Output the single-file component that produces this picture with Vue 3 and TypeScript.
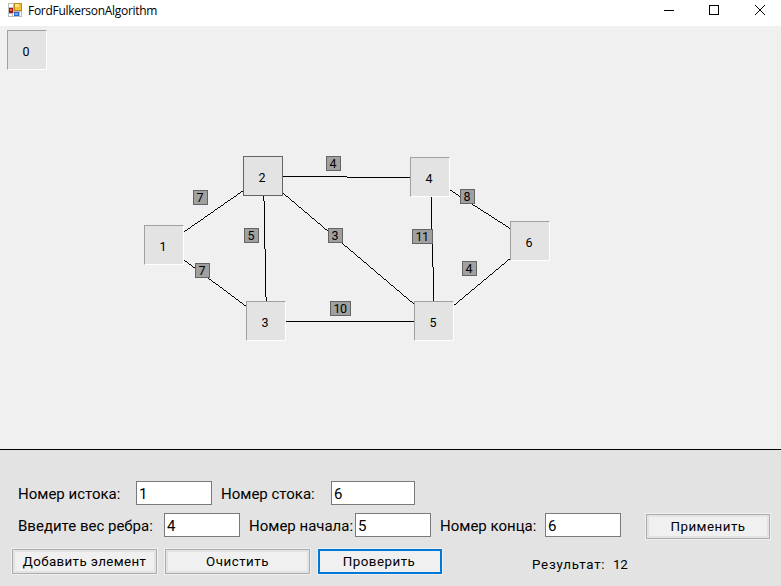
<script setup lang="ts">
import { computed, ref } from 'vue'

interface GraphNode { id: number; x: number; y: number; active?: boolean }
interface Edge { from: number; to: number; weight: number; x: number; y: number }

const nodes: GraphNode[] = [
  { id: 0, x: 7, y: 4 },
  { id: 1, x: 144, y: 199 },
  { id: 2, x: 243, y: 130, active: true },
  { id: 3, x: 246, y: 275 },
  { id: 4, x: 410, y: 131 },
  { id: 5, x: 414, y: 275 },
  { id: 6, x: 510, y: 195 },
]

const edges: Edge[] = [
  { from: 1, to: 2, weight: 7, x: 193, y: 164 },
  { from: 1, to: 3, weight: 7, x: 195, y: 237 },
  { from: 2, to: 3, weight: 5, x: 244, y: 202 },
  { from: 2, to: 4, weight: 4, x: 326, y: 130 },
  { from: 2, to: 5, weight: 3, x: 328, y: 202 },
  { from: 3, to: 5, weight: 10, x: 330, y: 275 },
  { from: 4, to: 5, weight: 11, x: 412, y: 203 },
  { from: 4, to: 6, weight: 8, x: 460, y: 163 },
  { from: 5, to: 6, weight: 4, x: 462, y: 235 },
]

// Builds a one-pixel aliased line as a run of unit squares along the major axis.
function steppedLine(a: GraphNode, b: GraphNode): string {
  const dx = b.x - a.x
  const dy = b.y - a.y
  const steps = Math.max(Math.abs(dx), Math.abs(dy))
  let d = ''
  for (let i = 0; i <= steps; i++) {
    const x = Math.round(a.x + 20 + (dx * i) / steps)
    const y = Math.round(a.y + 20 + (dy * i) / steps)
    d += `M${x} ${y}h1v1h-1z`
  }
  return d
}

const lines = computed(() =>
  edges.map((e) => ({ key: `${e.from}-${e.to}`, d: steppedLine(nodes[e.from], nodes[e.to]) })),
)

const source = ref('1')
const sink = ref('6')
const weight = ref('4')
const start = ref('5')
const end = ref('6')
const result = ref(12)
</script>

<template>
  <div class="window">
    <header class="titlebar">
      <svg class="app-icon" width="14" height="14" viewBox="0 0 14 14" shape-rendering="crispEdges">
        <rect width="14" height="14" fill="#bdbdbd" />
        <rect x="1" y="1" width="4" height="3" fill="#fff" />
        <rect x="1" y="11" width="3" height="2" fill="#fff" />
        <rect x="5" y="10" width="1" height="3" fill="#fff" />
        <rect x="12" y="9" width="1" height="4" fill="#fff" />
        <rect x="6" y="0" width="8" height="8" fill="#b98a18" />
        <rect x="7" y="1" width="6" height="6" fill="#f2c23c" />
        <rect x="7" y="1" width="4" height="3" fill="#ffe07a" />
        <rect x="1" y="5" width="4" height="5" fill="#a31515" />
        <rect x="2" y="6" width="2" height="2" fill="#e76a5c" />
        <rect x="6" y="9" width="5" height="4" fill="#2f62c8" />
        <rect x="7" y="10" width="3" height="2" fill="#79aaf4" />
      </svg>
      <h1 class="title">FordFulkersonAlgorithm</h1>
      <div class="controls">
        <svg width="10" height="10" viewBox="0 0 10 10" shape-rendering="crispEdges"><path d="M0 5.5H10" /></svg>
        <svg width="10" height="10" viewBox="0 0 10 10" shape-rendering="crispEdges"><path d="M.5 .5H9.5V9.5H.5Z" /></svg>
        <svg class="close" width="10" height="10" viewBox="0 0 10 10"><path d="M0 0L10 10M10 0L0 10" /></svg>
      </div>
    </header>

    <main class="canvas">
      <svg class="edges" width="781" height="423" shape-rendering="crispEdges">
        <path v-for="l in lines" :key="l.key" :d="l.d" />
      </svg>
      <div
        v-for="n in nodes"
        :key="n.id"
        class="node"
        :class="{ active: n.active }"
        :style="{ left: n.x + 'px', top: n.y + 'px' }"
      ><span>{{ n.id }}</span></div>
      <div
        v-for="e in edges"
        :key="e.from + '-' + e.to"
        class="weight"
        :class="{ wide: e.weight > 9 }"
        :style="{ left: e.x + 'px', top: e.y + 'px' }"
      >{{ e.weight }}</div>
    </main>

    <section class="panel">
      <div class="row first">
        <label class="l-source" for="source">Номер истока:</label>
        <input id="source" v-model="source" />
        <label class="l-sink" for="sink">Номер стока:</label>
        <input id="sink" v-model="sink" class="long" />
      </div>
      <div class="row second">
        <label class="l-weight" for="weight">Введите вес ребра:</label>
        <input id="weight" v-model="weight" />
        <label class="l-start" for="start">Номер начала:</label>
        <input id="start" v-model="start" />
        <label class="l-end" for="end">Номер конца:</label>
        <input id="end" v-model="end" />
        <button class="apply">Применить</button>
      </div>
      <div class="row third">
        <button class="add">Добавить элемент</button>
        <button class="clear">Очистить</button>
        <button class="check">Проверить</button>
        <p class="result"><span class="caption">Результат:</span><span class="value">{{ result }}</span></p>
      </div>
    </section>
  </div>
</template>

<style>
body {
  margin: 0;
  overflow: hidden;
}
</style>

<style scoped>
.window {
  display: flex;
  flex-direction: column;
  width: 781px;
  height: 586px;
  background: #f0f0f0;
  color: #000;
  font-family: Roboto, "Liberation Sans", Arial, sans-serif;
}
.titlebar {
  display: flex;
  box-sizing: border-box;
  height: 26px;
  padding: 3px 16px 0 8px;
  background: #fff;
}
.app-icon {
  flex: none;
}
.title {
  margin: 0 0 0 6px;
  font: 12px/16px "Open Sans", "Noto Sans", sans-serif;
  letter-spacing: -0.29px;
}
.controls {
  display: flex;
  gap: 35px;
  margin-left: auto;
  padding-top: 2px;
}
.controls svg {
  fill: none;
  stroke: #000;
}
.controls .close {
  margin-left: 1px;
}
.canvas {
  position: relative;
  height: 423px;
  overflow: hidden;
}
.edges {
  display: block;
  fill: #000;
}
.node,
.weight {
  position: absolute;
  box-sizing: border-box;
  display: flex;
  align-items: center;
  justify-content: center;
}
.node {
  width: 40px;
  height: 40px;
  border: 1px solid;
  border-color: #a0a0a0 #fff #fff #a0a0a0;
  background: #e3e3e3;
  font-size: 12.5px;
  padding: 2px 2px 0 0;
}
.node.active {
  border-color: #646464;
}
.weight {
  width: 15px;
  height: 15px;
  padding-right: 1px;
  border: 1px solid #646464;
  background: #a0a0a0;
  font-size: 12.5px;
  line-height: 14px;
}
.weight.wide {
  width: 21px;
  letter-spacing: -0.5px;
}
.panel {
  box-sizing: border-box;
  flex: 1;
  padding: 31px 11px 0 12px;
  border-top: 1px solid #000;
  background: #e3e3e3;
}
.row {
  display: flex;
}
.row.first,
.row.second {
  height: 32px;
}
label {
  box-sizing: border-box;
  flex: none;
  padding-top: 4px;
  font-size: 15px;
  line-height: 18px;
  white-space: nowrap;
}
.l-source { width: 124px; padding-left: 6px; }
.l-sink { width: 119px; padding-left: 9px; }
.l-weight { width: 152px; padding-left: 6px; }
.l-start { width: 115px; padding-left: 9px; }
.l-end { width: 114px; padding-left: 9px; }
input {
  box-sizing: border-box;
  flex: none;
  width: 76px;
  height: 24px;
  margin: 0;
  padding: 1px 2px 0;
  border: 1px solid #7a7a7a;
  border-radius: 0;
  outline: none;
  background: #fff;
  color: #000;
  font: 15px Roboto, "Liberation Sans", Arial, sans-serif;
}
input.long {
  width: 84px;
}
button {
  box-sizing: border-box;
  flex: none;
  height: 25px;
  margin: 0;
  padding: 0;
  border: 1px solid #adadad;
  border-radius: 0;
  background: #f0f0f0;
  box-shadow: 0 0 0 1px #f0f0f0, inset 0 0 0 2px #e3e3e3;
  color: #000;
  font: 13.33px/22px Roboto, "Liberation Sans", Arial, sans-serif;
  letter-spacing: 0.5px;
  white-space: nowrap;
}
.apply {
  width: 124px;
  margin: 1px 0 0 auto;
}
.third {
  padding-top: 4px;
}
.add,
.clear {
  width: 145px;
}
.add {
  letter-spacing: 0.38px;
}
.clear {
  margin-left: 8px;
}
.check {
  width: 124px;
  margin-left: 8px;
  padding-right: 2px;
  border: 2px solid #0078d7;
  box-shadow: 0 0 0 1px #f0f0f0;
  line-height: 20px;
}
.result {
  display: flex;
  margin: 8px 0 0 90px;
  font-size: 13.33px;
  line-height: 16px;
  letter-spacing: 0.75px;
}
.caption {
  width: 81px;
}
.value {
  letter-spacing: -0.2px;
}
</style>
